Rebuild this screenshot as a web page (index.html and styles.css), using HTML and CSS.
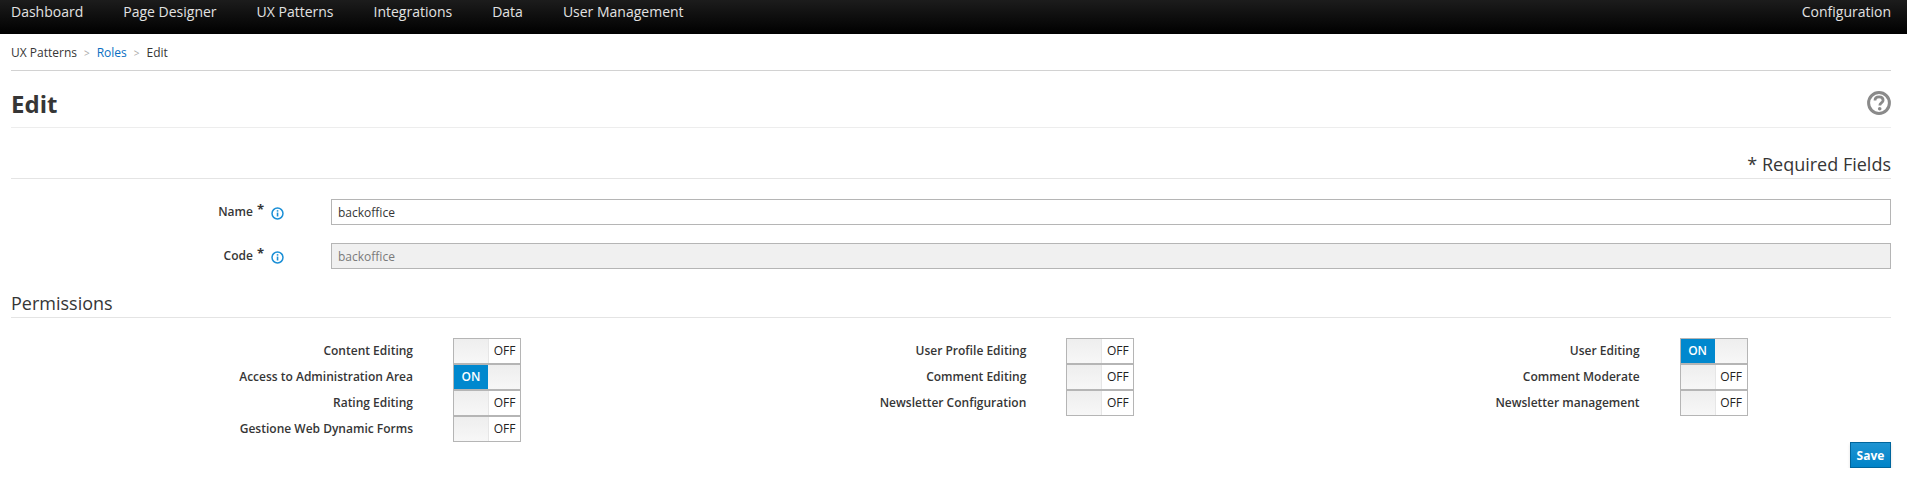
FILE: index.html
```html
<!DOCTYPE html>
<html lang="en">
<head>
<meta charset="utf-8">
<title>Edit</title>
<link rel="stylesheet" href="styles.css">
</head>
<body>
<nav class="topbar">
  <ul class="nav-main">
    <li>Dashboard</li>
    <li>Page Designer</li>
    <li>UX Patterns</li>
    <li>Integrations</li>
    <li>Data</li>
    <li>User Management</li>
  </ul>
  <span class="nav-config">Configuration</span>
</nav>
<main class="page">
  <div class="breadcrumb">
    <span>UX Patterns</span><span class="sep">&gt;</span><a class="crumb-link">Roles</a><span class="sep">&gt;</span><span>Edit</span>
  </div>
  <header class="title-row">
    <h1>Edit</h1>
    <svg class="help" viewBox="0 0 24 24" width="24" height="24" aria-hidden="true">
      <circle cx="12" cy="12" r="10.4" fill="none" stroke="#8a8a8a" stroke-width="3"/>
      <path d="M8 9.6c0-2.4 1.8-3.7 4.1-3.7s4 1.3 4 3.3c0 2.8-3.3 2.7-3.3 5.2" fill="none" stroke="#8a8a8a" stroke-width="2.8"/>
      <circle cx="12.7" cy="17.8" r="1.8" fill="#8a8a8a"/>
    </svg>
  </header>
  <div class="required">* Required Fields</div>
  <div class="field">
    <label class="field-label">Name<span class="star">*</span><svg class="info" viewBox="0 0 14 14" width="13" height="13" aria-hidden="true"><circle cx="7" cy="7" r="5.9" fill="none" stroke="#1b8fd6" stroke-width="1.6"/><rect x="6.2" y="6" width="1.7" height="4.2" fill="#1b8fd6"/><rect x="6.2" y="3.4" width="1.7" height="1.6" fill="#1b8fd6"/></svg></label>
    <input class="text-input" type="text" value="backoffice">
  </div>
  <div class="field">
    <label class="field-label">Code<span class="star">*</span><svg class="info" viewBox="0 0 14 14" width="13" height="13" aria-hidden="true"><circle cx="7" cy="7" r="5.9" fill="none" stroke="#1b8fd6" stroke-width="1.6"/><rect x="6.2" y="6" width="1.7" height="4.2" fill="#1b8fd6"/><rect x="6.2" y="3.4" width="1.7" height="1.6" fill="#1b8fd6"/></svg></label>
    <input class="text-input" type="text" value="backoffice" disabled>
  </div>
  <h2 class="section">Permissions</h2>
  <div class="perm-grid">
    <div class="perm"><span class="perm-label">Content Editing</span><span class="toggle off"><i></i><b>OFF</b></span></div>
    <div class="perm"><span class="perm-label">User Profile Editing</span><span class="toggle off"><i></i><b>OFF</b></span></div>
    <div class="perm"><span class="perm-label">User Editing</span><span class="toggle on"><b>ON</b><i></i></span></div>
    <div class="perm"><span class="perm-label">Access to Administration Area</span><span class="toggle on"><b>ON</b><i></i></span></div>
    <div class="perm"><span class="perm-label">Comment Editing</span><span class="toggle off"><i></i><b>OFF</b></span></div>
    <div class="perm"><span class="perm-label">Comment Moderate</span><span class="toggle off"><i></i><b>OFF</b></span></div>
    <div class="perm"><span class="perm-label">Rating Editing</span><span class="toggle off"><i></i><b>OFF</b></span></div>
    <div class="perm"><span class="perm-label">Newsletter Configuration</span><span class="toggle off"><i></i><b>OFF</b></span></div>
    <div class="perm"><span class="perm-label">Newsletter management</span><span class="toggle off"><i></i><b>OFF</b></span></div>
    <div class="perm"><span class="perm-label">Gestione Web Dynamic Forms</span><span class="toggle off"><i></i><b>OFF</b></span></div>
  </div>
  <div class="actions"><button class="save" type="button">Save</button></div>
</main>
</body>
</html>
```
FILE: styles.css
```css
* { box-sizing: border-box; }
html, body { margin: 0; padding: 0; }
body {
  background: #fff;
  color: #363636;
  font-family: "Open Sans", sans-serif;
  font-size: 12px;
  line-height: 20px;
}
.topbar {
  height: 34px;
  background: linear-gradient(to bottom, #1c1c1c, #000);
  display: flex;
  justify-content: space-between;
  align-items: center;
  padding: 0 16px 10px 11px;
  color: #e2e2e2;
  font-size: 14px;
  font-weight: 400;
}
.nav-main { list-style: none; margin: 0; padding: 0; display: flex; gap: 40px; }
.page { padding: 0 16px 0 11px; }
.breadcrumb {
  height: 37px;
  border-bottom: 1px solid #d2d2d2;
  padding-top: 9px;
  display: flex;
  align-items: flex-start;
}
.sep { color: #aaa; font-size: 10px; margin: 0 7px; }
.crumb-link { color: #0a6fc2; }
.title-row {
  height: 57px;
  padding-top: 10px;
  border-bottom: 1px solid #ededed;
  display: flex;
  justify-content: space-between;
  align-items: center;
}
h1 { margin: 0; font-size: 24px; font-weight: 700; color: #363636; line-height: 30px; }
.help { display: block; margin-top: -2px; }
.required {
  height: 51px;
  border-bottom: 1px solid #e4e4e4;
  text-align: right;
  font-size: 18px;
  padding-top: 24px;
  line-height: 24px;
}
.field { display: flex; align-items: center; margin-top: 20px; }
.field + .field { margin-top: 18px; }
.field-label {
  width: 320px;
  padding-right: 47px;
  display: flex;
  justify-content: flex-end;
  align-items: center;
  font-weight: 600;
}
.star { font-size: 13px; line-height: 14px; font-weight: 700; margin: -7px 0 0 4px; }
.info { margin: 2px 0 0 7px; }
.text-input {
  flex: 1;
  height: 26px;
  border: 1px solid #b5b5b5;
  padding: 0 6px;
  font: 12px "Open Sans", sans-serif;
  color: #363636;
  background: #fff;
}
.text-input:disabled { background: #f0f0f0; color: #7a7a7a; }
.section {
  margin: 21px 0 0;
  height: 28px;
  font-size: 18px;
  font-weight: 400;
  line-height: 26px;
  border-bottom: 1px solid #e4e4e4;
}
.perm-grid {
  display: grid;
  grid-template-columns: repeat(3, 613.3px);
  margin-top: 20px;
}
.perm { display: flex; align-items: center; height: 26px; }
.perm-label { width: 402px; text-align: right; font-weight: 600; font-size: 12px; }
.toggle {
  margin-left: 40px;
  width: 68px;
  height: 26px;
  border: 1px solid #b5b5b5;
  display: flex;
  font-size: 12px;
  line-height: 24px;
  background: #f4f4f4;
}
.toggle i { flex: 1; background: linear-gradient(to bottom, #eee, #f7f7f7); }
.toggle b { width: 32px; text-align: center; font-weight: 400; }
.toggle.off b { background: #fff; border-left: 1px solid #e6e6e6; color: #222; }
.toggle.on b { background: #0088ce; color: #fff; font-weight: 600; width: 34px; }
.actions { display: flex; justify-content: flex-end; }
.save {
  width: 41px;
  height: 26px;
  background: linear-gradient(to bottom, #1f94d2, #0083c8);
  border: 1px solid #00659c;
  box-shadow: 0 2px 3px rgba(0, 0, 0, 0.12);
  color: #fff;
  font: 700 12px "Open Sans", sans-serif;
  padding: 0;
}
```
